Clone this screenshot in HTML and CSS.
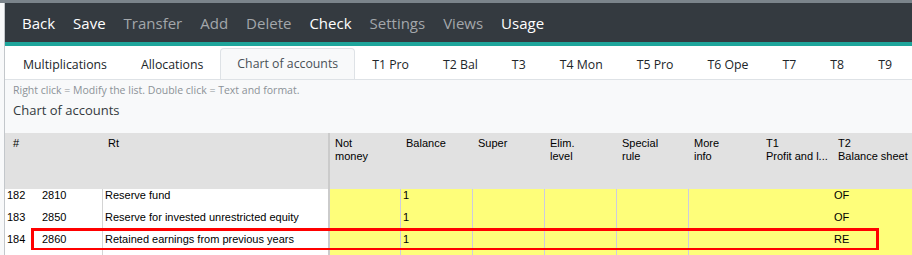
FILE: index.html
```html
<!DOCTYPE html>
<html lang="en">

<head>
    <meta charset="UTF-8">
    <title>Chart of accounts</title>
    <link rel="stylesheet" href="styles.css">
</head>

<body>
    <div class="topline"></div>
    <div class="frame">
        <div class="toolbar">
            <span class="tool">Back</span>
            <span class="tool">Save</span>
            <span class="tool off">Transfer</span>
            <span class="tool off">Add</span>
            <span class="tool off">Delete</span>
            <span class="tool">Check</span>
            <span class="tool off">Settings</span>
            <span class="tool off">Views</span>
            <span class="tool">Usage</span>
        </div>

        <div class="tabs">
            <span class="tab">Multiplications</span>
            <span class="tab">Allocations</span>
            <span class="tab active">Chart of accounts</span>
            <span class="tab">T1 Pro</span>
            <span class="tab">T2 Bal</span>
            <span class="tab">T3</span>
            <span class="tab">T4 Mon</span>
            <span class="tab">T5 Pro</span>
            <span class="tab">T6 Ope</span>
            <span class="tab">T7</span>
            <span class="tab">T8</span>
            <span class="tab">T9</span>
        </div>

        <div class="info">
            <p class="hint">Right click = Modify the list. Double click = Text and format.</p>
            <h2 class="title">Chart of accounts</h2>
        </div>

        <div class="grid">
            <div class="head">
                <div class="hcell">#</div>
                <div class="hcell"></div>
                <div class="hcell">Rt</div>
                <div class="hcell sep">Not<br>money</div>
                <div class="hcell">Balance</div>
                <div class="hcell">Super</div>
                <div class="hcell">Elim.<br>level</div>
                <div class="hcell">Special<br>rule</div>
                <div class="hcell">More<br>info</div>
                <div class="hcell">T1<br>Profit and l...</div>
                <div class="hcell">T2<br>Balance sheet</div>
            </div>

            <div class="rows">
                <div class="row first">
                    <div class="cell">182</div>
                    <div class="cell acc">2810</div>
                    <div class="cell desc">Reserve fund</div>
                    <div class="cell y sep"></div>
                    <div class="cell y ln">1</div>
                    <div class="cell y ln"></div>
                    <div class="cell y ln"></div>
                    <div class="cell y ln"></div>
                    <div class="cell y ln"></div>
                    <div class="cell y"></div>
                    <div class="cell y">OF</div>
                </div>
                <div class="row">
                    <div class="cell">183</div>
                    <div class="cell acc">2850</div>
                    <div class="cell desc">Reserve for invested unrestricted equity</div>
                    <div class="cell y sep"></div>
                    <div class="cell y ln">1</div>
                    <div class="cell y ln"></div>
                    <div class="cell y ln"></div>
                    <div class="cell y ln"></div>
                    <div class="cell y ln"></div>
                    <div class="cell y"></div>
                    <div class="cell y">OF</div>
                </div>
                <div class="row marked">
                    <div class="cell">184</div>
                    <div class="cell acc">2860</div>
                    <div class="cell desc">Retained earnings from previous years</div>
                    <div class="cell y sep"></div>
                    <div class="cell y ln">1</div>
                    <div class="cell y ln"></div>
                    <div class="cell y ln"></div>
                    <div class="cell y ln"></div>
                    <div class="cell y ln"></div>
                    <div class="cell y"></div>
                    <div class="cell y">RE</div>
                    <div class="redbox"></div>
                </div>
                <div class="row">
                    <div class="cell"></div>
                    <div class="cell acc"></div>
                    <div class="cell desc"></div>
                    <div class="cell y sep"></div>
                    <div class="cell y ln"></div>
                    <div class="cell y ln"></div>
                    <div class="cell y ln"></div>
                    <div class="cell y ln"></div>
                    <div class="cell y ln"></div>
                    <div class="cell y"></div>
                    <div class="cell y"></div>
                </div>
            </div>
        </div>
    </div>
</body>

</html>
```

FILE: styles.css
```css
body {
    margin: 0;
    background-color: #f8f9fa;
    font-family: "Open Sans", "Noto Sans", sans-serif;
    overflow: hidden;
}

.topline {
    height: 3px;
    background-color: #7b848b;
}

.frame {
    margin-left: 4px;
    border-left: 1px solid #c3c7cb;
}

.toolbar {
    height: 39px;
    background-color: #343a40;
    border-bottom: 4px solid #1ea59b;
    display: flex;
    align-items: center;
    padding-left: 8px;
}

.tool {
    padding: 0 9px;
    font-size: 15px;
    color: #ffffff;
}

.tool.off {
    color: #a3a7ab;
}

.tabs {
    height: 33px;
    background-color: #ffffff;
    border-bottom: 1px solid #dee2e6;
    display: flex;
    align-items: flex-end;
    padding-left: 1px;
    overflow: hidden;
}

.tab {
    flex-shrink: 0;
    white-space: nowrap;
    height: 30px;
    line-height: 30px;
    padding: 0 16px;
    font-size: 12.3px;
    color: #212529;
    border: 1px solid transparent;
    border-bottom: 0;
    margin-bottom: -1px;
}

.tab.active {
    background-color: #f8f9fa;
    border-color: #dee2e6;
    border-radius: 4px 4px 0 0;
    color: #495057;
    height: 31px;
}

.info {
    height: 53px;
    padding-left: 8px;
}

.hint {
    margin: 0;
    padding-top: 3px;
    font-size: 10.5px;
    color: #8c9298;
}

.title {
    margin: 4px 0 0 0;
    font-size: 13px;
    font-weight: normal;
    color: #343a40;
}

.grid {
    font-family: "Liberation Sans", Arial, sans-serif;
    font-size: 11px;
    color: #000000;
}

.head,
.row {
    display: grid;
    grid-template-columns: 25px 72px 226px repeat(7, 72px) 1fr;
}

.head {
    height: 56px;
    background-color: #e1e1e1;
    position: relative;
    z-index: 1;
}

.hcell {
    padding: 4px 0 0 6px;
    line-height: 13px;
    white-space: nowrap;
}

.hcell:first-child {
    padding-left: 8px;
}

.hcell.sep {
    border-left: 2px solid #cbcbcb;
    padding-left: 5px;
}

.rows {
    height: 66px;
    overflow: hidden;
}

.row {
    height: 22px;
    position: relative;
}

.row.first {
    margin-top: -5px;
}

.cell {
    line-height: 22px;
    padding-left: 2px;
    background-color: #ffffff;
    white-space: nowrap;
    overflow: hidden;
}

.cell.acc {
    padding-left: 12px;
}

.cell.desc {
    border-left: 1px solid #d4d4d4;
    padding-left: 2px;
}

.cell.y {
    background-color: #fefe7a;
}

.cell.sep {
    border-left: 2px solid #cbcbcb;
}

.cell.ln {
    border-left: 1px solid #cdcbe0;
}

.redbox {
    position: absolute;
    left: 26px;
    top: 0;
    width: 848px;
    height: 23px;
    box-sizing: border-box;
    border: 3px solid #ff0000;
}
```
